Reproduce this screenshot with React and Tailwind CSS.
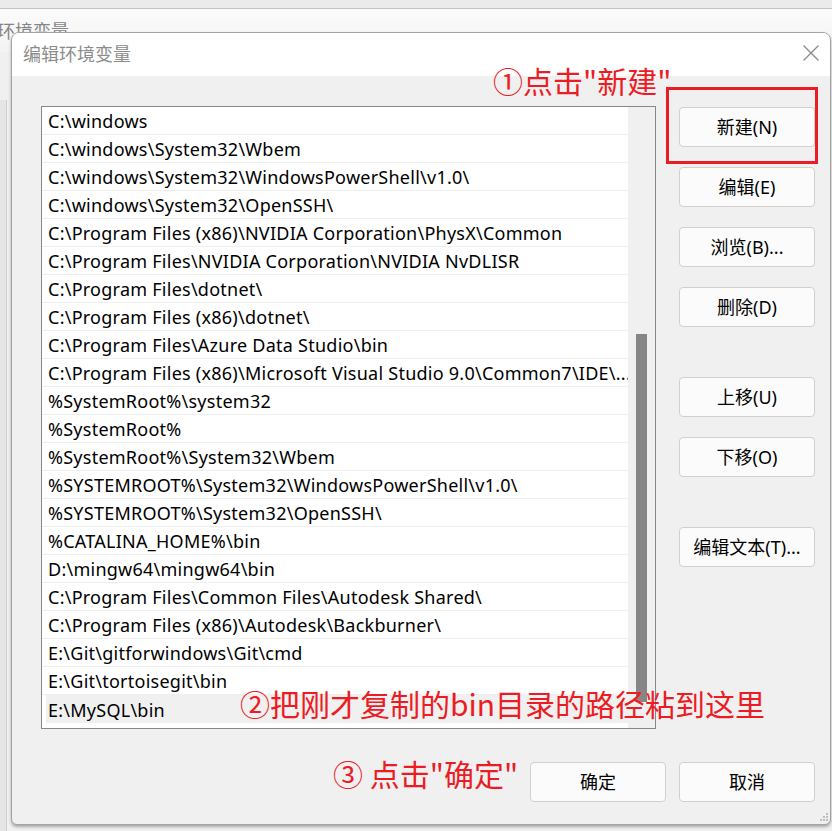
import React from 'react';

const rows = [
  'C:\\windows',
  'C:\\windows\\System32\\Wbem',
  'C:\\windows\\System32\\WindowsPowerShell\\v1.0\\',
  'C:\\windows\\System32\\OpenSSH\\',
  'C:\\Program Files (x86)\\NVIDIA Corporation\\PhysX\\Common',
  'C:\\Program Files\\NVIDIA Corporation\\NVIDIA NvDLISR',
  'C:\\Program Files\\dotnet\\',
  'C:\\Program Files (x86)\\dotnet\\',
  'C:\\Program Files\\Azure Data Studio\\bin',
  'C:\\Program Files (x86)\\Microsoft Visual Studio 9.0\\Common7\\IDE\\...',
  '%SystemRoot%\\system32',
  '%SystemRoot%',
  '%SystemRoot%\\System32\\Wbem',
  '%SYSTEMROOT%\\System32\\WindowsPowerShell\\v1.0\\',
  '%SYSTEMROOT%\\System32\\OpenSSH\\',
  '%CATALINA_HOME%\\bin',
  'D:\\mingw64\\mingw64\\bin',
  'C:\\Program Files\\Common Files\\Autodesk Shared\\',
  'C:\\Program Files (x86)\\Autodesk\\Backburner\\',
  'E:\\Git\\gitforwindows\\Git\\cmd',
  'E:\\Git\\tortoisegit\\bin',
];

const font = { fontFamily: '"Noto Sans", "Noto Sans CJK SC", sans-serif' };
const cjk = { fontFamily: '"Noto Sans CJK SC", "Noto Sans", sans-serif' };

function Btn({ children }) {
  return (
    <button
      className="w-[136px] h-[40px] shrink-0 bg-[#fbfbfb] border border-[#d0d0d0] rounded-[4px] text-[18px] text-black flex items-center justify-center leading-[24px]"
      style={font}
    >
      {children}
    </button>
  );
}

export default function App() {
  return (
    <div className="relative w-[832px] h-[831px] overflow-hidden bg-[#ececec]">
      {/* window behind */}
      <div className="h-[9px] bg-[#ebebeb] border-b border-[#c2c2c2]" />
      <div className="h-[43px] bg-gradient-to-b from-[#fbfbfb] to-[#f3f3f3] flex items-start pt-[10px]">
        <span className="-ml-[3px] text-[18px] text-[#858585] leading-[22px]" style={cjk}>
          环境变量
        </span>
      </div>
      <div className="flex h-[779px] bg-[#f0f0f0] pt-[48px]">
        <div className="w-[6px] bg-[#e5e5e5]" />
        <div className="w-px bg-[#cfcfcf]" />
      </div>

      {/* dialog */}
      <div className="absolute left-[11px] top-[32px] w-[820px] h-[793px] flex flex-col rounded-t-[8px] rounded-b-[6px] border border-[#a3a3a3] bg-[#f0f0f0] shadow-[0_2px_3px_rgba(0,0,0,0.3)] overflow-hidden">
        <div className="h-[43px] shrink-0 bg-white flex items-center justify-between pl-[11px] pr-[10px]">
          <span className="text-[18px] text-[#8c8c8c] leading-[24px] mt-[-4px]" style={cjk}>编辑环境变量</span>
          <svg width="18" height="18" viewBox="0 0 18 18" className="mt-[-3px]">
            <path d="M1.5 1.5 L16.5 16.5 M16.5 1.5 L1.5 16.5" stroke="#8a8a8a" strokeWidth="1.3" fill="none" />
          </svg>
        </div>

        <div className="flex-1 flex flex-col pl-[29px] pr-[15px] pt-[30px]">
          <div className="flex gap-[23px]">
            {/* list */}
            <div className="w-[615px] h-[623px] border border-[#878787] bg-white flex">
              <div className="w-[586px] flex flex-col">
                {rows.map((r, i) => (
                  <div
                    key={i}
                    className="h-[28px] shrink-0 border-b border-[#efefef] pl-[6px] flex items-center text-[18px] tracking-[0.25px] text-black whitespace-nowrap"
                    style={font}
                  >
                    <span className="leading-[26px] pt-[1px]">{r}</span>
                  </div>
                ))}
                <div
                  className="h-[28px] shrink-0 ml-[4px] pl-[2px] bg-[#f0f0f0] flex items-center text-[18px] tracking-[0.25px] text-black"
                  style={font}
                >
                  <span className="leading-[26px] pt-[1px]">E:\MySQL\bin</span>
                </div>
              </div>
              <div className="flex-1 bg-[#f0f0f0] pt-[227px] pl-[8px]">
                <div className="w-[11px] h-[368px] bg-[#868686]" />
              </div>
            </div>

            {/* buttons */}
            <div className="flex flex-col pt-px">
              <Btn>新建(N)</Btn>
              <div className="h-[20px]" />
              <Btn>编辑(E)</Btn>
              <div className="h-[20px]" />
              <Btn>浏览(B)...</Btn>
              <div className="h-[20px]" />
              <Btn>删除(D)</Btn>
              <div className="h-[50px]" />
              <Btn>上移(U)</Btn>
              <div className="h-[20px]" />
              <Btn>下移(O)</Btn>
              <div className="h-[50px]" />
              <Btn>编辑文本(T)...</Btn>
            </div>
          </div>

          <div className="mt-[33px] flex justify-end gap-[13px]">
            <Btn>确定</Btn>
            <Btn>取消</Btn>
          </div>
        </div>

        <svg width="9" height="9" viewBox="0 0 9 9" className="absolute right-[1px] bottom-[2px]">
          <rect x="6" y="0" width="2" height="2" fill="#bdbdbd" />
          <rect x="3" y="3" width="2" height="2" fill="#bdbdbd" />
          <rect x="6" y="3" width="2" height="2" fill="#bdbdbd" />
          <rect x="0" y="6" width="2" height="2" fill="#bdbdbd" />
          <rect x="3" y="6" width="2" height="2" fill="#bdbdbd" />
          <rect x="6" y="6" width="2" height="2" fill="#bdbdbd" />
        </svg>
      </div>

      {/* annotations */}
      <div className="absolute left-[666px] top-[87px] w-[152px] h-[77px] border-[3px] border-[#ec1c24]" />
      <div className="absolute left-[493px] top-[65px] text-[30px] leading-[30px] text-[#ec1c24] whitespace-nowrap" style={cjk}>
        ①点击"新建"
      </div>
      <div className="absolute left-[240px] top-[688px] text-[30px] leading-[30px] text-[#ec1c24] whitespace-nowrap" style={cjk}>
        ②把刚才复制的bin目录的路径粘到这里
      </div>
      <div className="absolute left-[333px] top-[758px] text-[30px] leading-[30px] text-[#ec1c24] whitespace-nowrap" style={cjk}>
        ③ 点击"确定"
      </div>
    </div>
  );
}
